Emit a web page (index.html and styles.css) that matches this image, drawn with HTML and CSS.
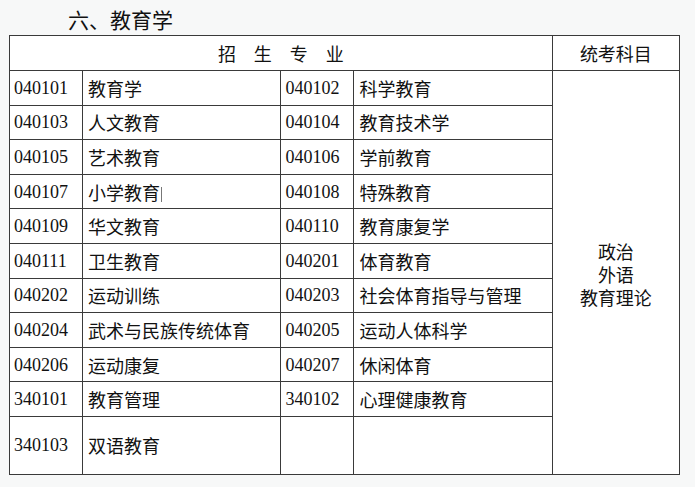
FILE: index.html
```html
<!DOCTYPE html>
<html lang="zh">
<head>
<meta charset="utf-8">
<title>六、教育学</title>
<link rel="stylesheet" href="styles.css">
</head>
<body>
<div class="title">六、教育学</div>
<table class="grid">
  <colgroup>
    <col class="c-code"><col class="c-name"><col class="c-code"><col class="c-name"><col class="c-exam">
  </colgroup>
  <thead>
    <tr class="head">
      <th colspan="4">招　生　专　业</th>
      <th>统考科目</th>
    </tr>
  </thead>
  <tbody>
    <tr><td class="code">040101</td><td class="name">教育学</td><td class="code">040102</td><td class="name">科学教育</td>
      <td class="exam" rowspan="11"><div class="line">政治</div><div class="line">外语</div><div class="line">教育理论</div></td></tr>
    <tr><td class="code">040103</td><td class="name">人文教育</td><td class="code">040104</td><td class="name">教育技术学</td></tr>
    <tr><td class="code">040105</td><td class="name">艺术教育</td><td class="code">040106</td><td class="name">学前教育</td></tr>
    <tr><td class="code">040107</td><td class="name">小学教育<span class="caret"></span></td><td class="code">040108</td><td class="name">特殊教育</td></tr>
    <tr><td class="code">040109</td><td class="name">华文教育</td><td class="code">040110</td><td class="name">教育康复学</td></tr>
    <tr><td class="code">040111</td><td class="name">卫生教育</td><td class="code">040201</td><td class="name">体育教育</td></tr>
    <tr><td class="code">040202</td><td class="name">运动训练</td><td class="code">040203</td><td class="name">社会体育指导与管理</td></tr>
    <tr><td class="code">040204</td><td class="name">武术与民族传统体育</td><td class="code">040205</td><td class="name">运动人体科学</td></tr>
    <tr><td class="code">040206</td><td class="name">运动康复</td><td class="code">040207</td><td class="name">休闲体育</td></tr>
    <tr><td class="code">340101</td><td class="name">教育管理</td><td class="code">340102</td><td class="name">心理健康教育</td></tr>
    <tr class="last"><td class="code">340103</td><td class="name">双语教育</td><td class="code"></td><td class="name"></td></tr>
  </tbody>
</table>
</body>
</html>
```
FILE: styles.css
```css
html, body {
  margin: 0;
  padding: 0;
  background: #f7f8f8;
}
body {
  font-family: "Noto Sans CJK SC", "Noto Sans", sans-serif;
  color: #111;
}
.title {
  height: 35px;
  box-sizing: border-box;
  padding-left: 68px;
  padding-top: 4px;
  font-size: 21px;
  line-height: 30px;
}
.grid {
  margin-left: 9px;
  border-collapse: collapse;
  table-layout: fixed;
  width: 671px;
  background: #fff;
  border: 1px solid #1a1a1a;
}
.c-code { width: 73px; }
.c-name { width: 198px; }
.c-exam { width: 127px; }
.grid th, .grid td {
  border: 1px solid #3a3a3a;
  padding: 0;
  font-size: 18px;
  line-height: 24px;
  vertical-align: middle;
  white-space: nowrap;
}
.grid th {
  font-weight: normal;
  text-align: center;
}
.head { height: 35px; }
.grid tbody tr { height: 34.6px; }
.grid tbody tr.last { height: 58px; }
.code {
  font-family: "Liberation Serif", "Noto Sans CJK SC", serif;
  padding-left: 4px !important;
  text-align: left;
}
.name {
  padding-left: 5px !important;
  text-align: left;
}
.exam {
  text-align: center;
  padding-top: 4px !important;
}
.line {
  height: 23px;
  line-height: 23px;
  overflow: visible;
}
.caret {
  display: inline-block;
  width: 1px;
  height: 15px;
  margin-left: 1px;
  background: #777;
  vertical-align: -2px;
}
```
